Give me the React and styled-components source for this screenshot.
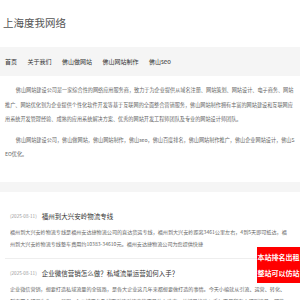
import React from 'react'
import styled, { createGlobalStyle } from 'styled-components'

const GlobalStyle = createGlobalStyle`
  body {
    margin: 0;
    background: #fff;
    font-family: "Noto Sans CJK SC", "Liberation Sans", sans-serif;
  }
`

const Page = styled.div`
  width: 300px;
  overflow: hidden;
`

const Header = styled.header`
  height: 47px;
  display: flex;
  align-items: center;
  padding: 0 3px;
  box-sizing: border-box;
`

const Logo = styled.h1`
  margin: 0;
  font-size: 10.5px;
  font-weight: normal;
  color: #555;
  line-height: 1;
`

const Nav = styled.nav`
  height: 29px;
  background: #f5f5f5;
  display: flex;
  align-items: center;
  padding: 0 0 0 5px;
`

const NavItem = styled.a`
  font-size: 6px;
  color: #333;
  margin-right: 10.5px;
  text-decoration: none;
`

const About = styled.section`
  padding: 7px 3px 14px 5px;
`

const Para = styled.p`
  margin: 0 0 6px;
  font-size: 5.15px;
  line-height: 14.5px;
  color: #666;
  text-indent: 2.1em;
  word-break: break-all;
`

const Band = styled.div`
  height: 10px;
  background: #f5f5f5;
`

const List = styled.section`
  padding: 10px 5px 0;
`

const Article = styled.article`
  padding: 6px 5px 8px;
  border-bottom: ${({ $last }) => ($last ? 'none' : '1px solid #eee')};
`

const TitleRow = styled.div`
  display: flex;
  align-items: center;
  height: 16px;
  gap: 5px;
`

const Date = styled.span`
  font-size: 4.6px;
  color: #999;
`

const Title = styled.h3`
  margin: 0;
  font-size: 6.5px;
  font-weight: normal;
  color: #333;
`

const Desc = styled.p`
  margin: 2px 0 0;
  font-size: 5.1px;
  line-height: 12px;
  color: #666;
  word-break: break-all;
  display: -webkit-box;
  -webkit-line-clamp: 2;
  -webkit-box-orient: vertical;
  overflow: hidden;
`

const Badge = styled.div`
  position: fixed;
  right: 0;
  top: 247px;
  width: 43px;
  height: 36px;
  background: #ff0000;
  color: #fff;
  font-size: 7px;
  font-weight: bold;
  line-height: 16px;
  display: flex;
  flex-direction: column;
  justify-content: center;
  align-items: center;
`

const navItems = ['首页', '关于我们', '佛山做网站', '佛山网站制作', '佛山seo']

const articles = [
  {
    date: '(2025-08-11)',
    title: '福州到大兴安岭物流专线',
    desc: '福州到大兴安岭物流专线是福州安达捷物流公司的直达货运专线，福州到大兴安岭距离3461公里左右，4到5天即可抵达，福州到大兴安岭物流专线整车费用约10383-34610元。福州安达捷物流公司为您提供快捷',
  },
  {
    date: '(2025-08-11)',
    title: '企业微信营销怎么做？私域流量运营如何入手？',
    desc: '企业微信营销，想要打造私域流量的全链路，是各大企业这几年来都想要做打造的事情。今天小编就从引流、运营、转化、裂变四个环节为你一一呈现。1.公域平台及线下引流引流真的不是什么难事，关键是找准入手！不是所有人都叫流量，可能',
  },
]

const App = () => {
  return (
    <Page>
      <GlobalStyle />
      <Header>
        <Logo>上海度我网络</Logo>
      </Header>

      <Nav>
        { navItems.map((item) => (
          <NavItem key={ item } href="#">{ item }</NavItem>
        )) }
      </Nav>

      <About>
        <Para>
          佛山网站建设公司是一家综合性的网络应用服务商，致力于为企业提供从域名注册、网站策划、网站设计、电子商务、网站推广、网站优化到为企业提供个性化软件开发等基于互联网的全面整合营销服务，佛山网站制作拥有丰富的网站建设和互联网应用系统开发管理经验、成熟的应用系统解决方案、优秀的网站开发工程师团队及专业的网站设计师团队。
        </Para>
        <Para>
          佛山网站建设公司，佛山做网站，佛山网站制作，佛山seo，佛山百度排名，佛山网站制作推广，佛山企业网站设计，佛山SEO优化。
        </Para>
      </About>

      <Band />

      <List>
        { articles.map((article, index) => (
          <Article key={ index } $last={ index === articles.length - 1 }>
            <TitleRow>
              <Date>{ article.date }</Date>
              <Title>{ article.title }</Title>
            </TitleRow>
            <Desc>{ article.desc }</Desc>
          </Article>
        )) }
      </List>

      <Badge>
        <span>本站排名出租</span>
        <span>整站可以仿站</span>
      </Badge>
    </Page>
  )
}

export default App
